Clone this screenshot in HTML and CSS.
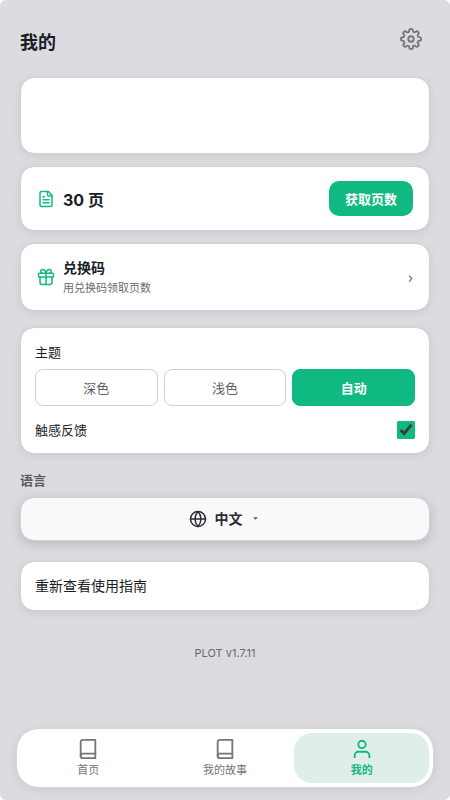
FILE: index.html
```html
<!DOCTYPE html>
<html lang="zh-CN">
<head>
<meta charset="utf-8">
<meta name="viewport" content="width=device-width, initial-scale=1">
<title>PLOT</title>
<link rel="stylesheet" href="styles.css">
</head>
<body>
<div class="app">
  <header class="header">
    <h1>我的</h1>
    <button class="icon-button" type="button" aria-label="设置">
      <svg class="icon gear" viewBox="0 0 24 24"><circle cx="12" cy="12" r="3"/><path d="M19.4 15a1.65 1.65 0 0 0 .33 1.82l.06.06a2 2 0 0 1-2.83 2.83l-.06-.06a1.65 1.65 0 0 0-1.82-.33 1.65 1.65 0 0 0-1 1.51V21a2 2 0 0 1-4 0v-.09A1.65 1.65 0 0 0 9 19.4a1.65 1.65 0 0 0-1.82.33l-.06.06a2 2 0 0 1-2.83-2.83l.06-.06a1.65 1.65 0 0 0 .33-1.82 1.65 1.65 0 0 0-1.51-1H3a2 2 0 0 1 0-4h.09A1.65 1.65 0 0 0 4.6 9a1.65 1.65 0 0 0-.33-1.82l-.06-.06a2 2 0 0 1 2.83-2.83l.06.06a1.65 1.65 0 0 0 1.82.33H9a1.65 1.65 0 0 0 1-1.51V3a2 2 0 0 1 4 0v.09a1.65 1.65 0 0 0 1 1.51 1.65 1.65 0 0 0 1.82-.33l.06-.06a2 2 0 0 1 2.83 2.83l-.06.06a1.65 1.65 0 0 0-.33 1.82V9a1.65 1.65 0 0 0 1.51 1H21a2 2 0 0 1 0 4h-.09a1.65 1.65 0 0 0-1.51 1z"/></svg>
    </button>
  </header>

  <main class="content">
    <section class="card profile"></section>

    <section class="card row pages">
      <svg class="icon accent" viewBox="0 0 24 24"><path d="M15 2H6a2 2 0 0 0-2 2v16a2 2 0 0 0 2 2h12a2 2 0 0 0 2-2V7z"/><path d="M14 2v4a2 2 0 0 0 2 2h4M16 13H8M16 17H8M10 9H8"/></svg>
      <strong class="count">30 页</strong>
      <button class="primary" type="button">获取页数</button>
    </section>

    <button class="card row redeem" type="button">
      <svg class="icon accent" viewBox="0 0 24 24"><rect x="2" y="7" width="20" height="5" rx="1"/><path d="M12 7v15M20 12v7a3 3 0 0 1-3 3H7a3 3 0 0 1-3-3v-7M7.500 7a2.500 2.500 0 0 1 0-5C11 2 12 7 12 7s1-5 4.500-5a2.500 2.500 0 0 1 0 5"/></svg>
      <span class="redeem-text">
        <span class="redeem-title">兑换码</span>
        <span class="redeem-sub">用兑换码领取页数</span>
      </span>
      <span class="chevron">›</span>
    </button>

    <section class="card preferences">
      <div class="pref-label" id="theme-label">主题</div>
      <div class="themes" role="group" aria-labelledby="theme-label">
        <button class="theme" type="button">深色</button>
        <button class="theme" type="button">浅色</button>
        <button class="theme selected" type="button" aria-pressed="true">自动</button>
      </div>
      <div class="haptics">
        <label class="pref-label" for="haptics">触感反馈</label>
        <input type="checkbox" id="haptics" checked>
      </div>
    </section>

    <h2 class="section-label">语言</h2>
    <button class="card language" type="button">
      <svg class="icon globe" viewBox="0 0 24 24"><circle cx="12" cy="12" r="10"/><path d="M2 12h20M12 2a15.300 15.300 0 0 1 4 10 15.300 15.300 0 0 1-4 10 15.300 15.300 0 0 1-4-10 15.300 15.300 0 0 1 4-10z"/></svg>
      <span>中文</span>
      <svg class="caret" viewBox="0 0 6 4"><path d="M0 0h6L3 3z"/></svg>
    </button>

    <button class="card guide" type="button">重新查看使用指南</button>

    <p class="version">PLOT v1.7.11</p>
  </main>

  <nav class="tabs">
    <a class="tab" href="#home">
      <svg class="icon" viewBox="0 0 24 24"><path d="M4 19.500A2.500 2.500 0 0 1 6.500 17H20"/><path d="M6.500 2H20v20H6.500A2.500 2.500 0 0 1 4 19.500v-15A2.500 2.500 0 0 1 6.500 2z"/></svg>
      <span>首页</span>
    </a>
    <a class="tab" href="#stories">
      <svg class="icon" viewBox="0 0 24 24"><path d="M4 19.500A2.500 2.500 0 0 1 6.500 17H20"/><path d="M6.500 2H20v20H6.500A2.500 2.500 0 0 1 4 19.500v-15A2.500 2.500 0 0 1 6.500 2z"/></svg>
      <span>我的故事</span>
    </a>
    <a class="tab active" href="#me" aria-current="page">
      <svg class="icon" viewBox="0 0 24 24"><path d="M20 21v-2a4 4 0 0 0-4-4H8a4 4 0 0 0-4 4v2"/><circle cx="12" cy="7" r="4"/></svg>
      <span>我的</span>
    </a>
  </nav>
</div>
</body>
</html>
```
FILE: styles.css
```css
* {
  box-sizing: border-box;
}

body {
  margin: 0;
  background: #fff;
  color: #1a1d26;
  font-family: Inter, "Noto Sans CJK SC", sans-serif;
  font-size: 13px;
  line-height: 20px;
}

button {
  font: inherit;
  color: inherit;
  cursor: pointer;
}

h1,
h2,
p {
  margin: 0;
}

.app {
  display: flex;
  flex-direction: column;
  min-height: 100vh;
  background: #dcdbe0;
  border-radius: 6px;
}

.header {
  display: flex;
  align-items: flex-start;
  justify-content: space-between;
  padding: 20px 20px 13px;
}

h1 {
  padding-top: 8px;
  font-size: 18px;
  line-height: 30px;
  font-weight: 700;
}

.icon {
  width: 18px;
  height: 18px;
  flex: none;
  fill: none;
  stroke: currentColor;
  stroke-width: 2;
  stroke-linecap: round;
  stroke-linejoin: round;
}

.accent {
  color: #10b981;
}

.icon-button {
  display: flex;
  padding: 8px 8px 14px;
  border: 0;
  background: none;
  color: #74757b;
}

.icon.gear {
  width: 22px;
  height: 22px;
}

.content {
  display: flex;
  flex-direction: column;
  flex: 1;
  padding: 0 20px;
}

.card {
  border: 1px solid #d2d2d6;
  border-radius: 14px;
  background: #fff;
  background-clip: padding-box;
  box-shadow: 0 2px 8px rgba(0, 0, 0, 0.08);
  text-align: left;
}

.profile {
  min-height: 77px;
  margin-bottom: 12px;
}

.row {
  display: flex;
  align-items: center;
  gap: 8px;
  padding: 14px 16px;
  margin-bottom: 12px;
}

.count {
  flex: 1;
  padding-top: 2px;
  font-size: 16px;
  font-weight: 700;
}

.primary {
  height: 35px;
  padding: 0 16px;
  border: 0;
  border-radius: 10px;
  background: #10b981;
  color: #fff;
  font-weight: 700;
}

.redeem {
  margin-bottom: 16px;
  padding-top: 12px;
  padding-bottom: 12px;
}

.redeem-text {
  display: flex;
  flex-direction: column;
  flex: 1;
  padding-top: 2px;
}

.redeem-title {
  font-size: 14px;
  font-weight: 700;
}

.redeem-sub {
  color: #6b6c75;
  font-size: 11px;
  line-height: 20px;
}

.chevron {
  color: #6b6c75;
  font-family: "Noto Sans", sans-serif;
  font-size: 16px;
}

.preferences {
  padding: 14px 14px 13px;
  margin-bottom: 16px;
}

.themes {
  display: grid;
  grid-template-columns: repeat(3, 1fr);
  gap: 6px;
  margin: 7px 0 14px;
}

.theme {
  height: 37px;
  padding: 0;
  border: 1px solid #cfcfd3;
  border-radius: 8px;
  background: #fff;
  color: #5e6068;
}

.theme.selected {
  border-color: #10b981;
  background: #10b981;
  color: #fff;
  font-weight: 700;
}

.haptics {
  display: flex;
  align-items: center;
  justify-content: space-between;
}

.haptics input {
  width: 18px;
  height: 18px;
  margin: 0;
  accent-color: #10b981;
}

.section-label {
  margin-bottom: 7px;
  color: #5a5b63;
  font-size: 13px;
  font-weight: 600;
}

.language {
  display: flex;
  align-items: center;
  justify-content: center;
  gap: 8px;
  height: 44px;
  margin-bottom: 20px;
  background: #f9f9fa;
  background-clip: padding-box;
  box-shadow: 0 3px 12px rgba(0, 0, 0, 0.16);
  color: #2c2d35;
  font-size: 14px;
  font-weight: 600;
}

.caret {
  width: 5px;
  height: 4px;
  margin: 0 4px 0 2px;
  fill: #5a5b63;
}

.guide {
  padding: 14px;
  font-size: 14px;
}

.version {
  margin-top: 32px;
  color: #686a72;
  font-size: 11px;
  text-align: center;
}

.tabs {
  display: grid;
  grid-template-columns: repeat(3, 1fr);
  gap: 2px;
  margin: 0 16px 12px;
  padding: 4px;
  border: 1px solid #d6d6da;
  border-radius: 22px;
  background: #fff;
  background-clip: padding-box;
  box-shadow: 0 2px 10px rgba(0, 0, 0, 0.08);
}

.tab {
  display: flex;
  flex-direction: column;
  align-items: center;
  gap: 2px;
  padding: 5px 0;
  border-radius: 18px;
  color: #74757b;
  font-size: 11px;
  line-height: 16px;
  text-decoration: none;
}

.tab .icon {
  width: 22px;
  height: 22px;
}

.tab.active {
  background: #e0eee9;
  color: #10b981;
  font-weight: 700;
}
```
